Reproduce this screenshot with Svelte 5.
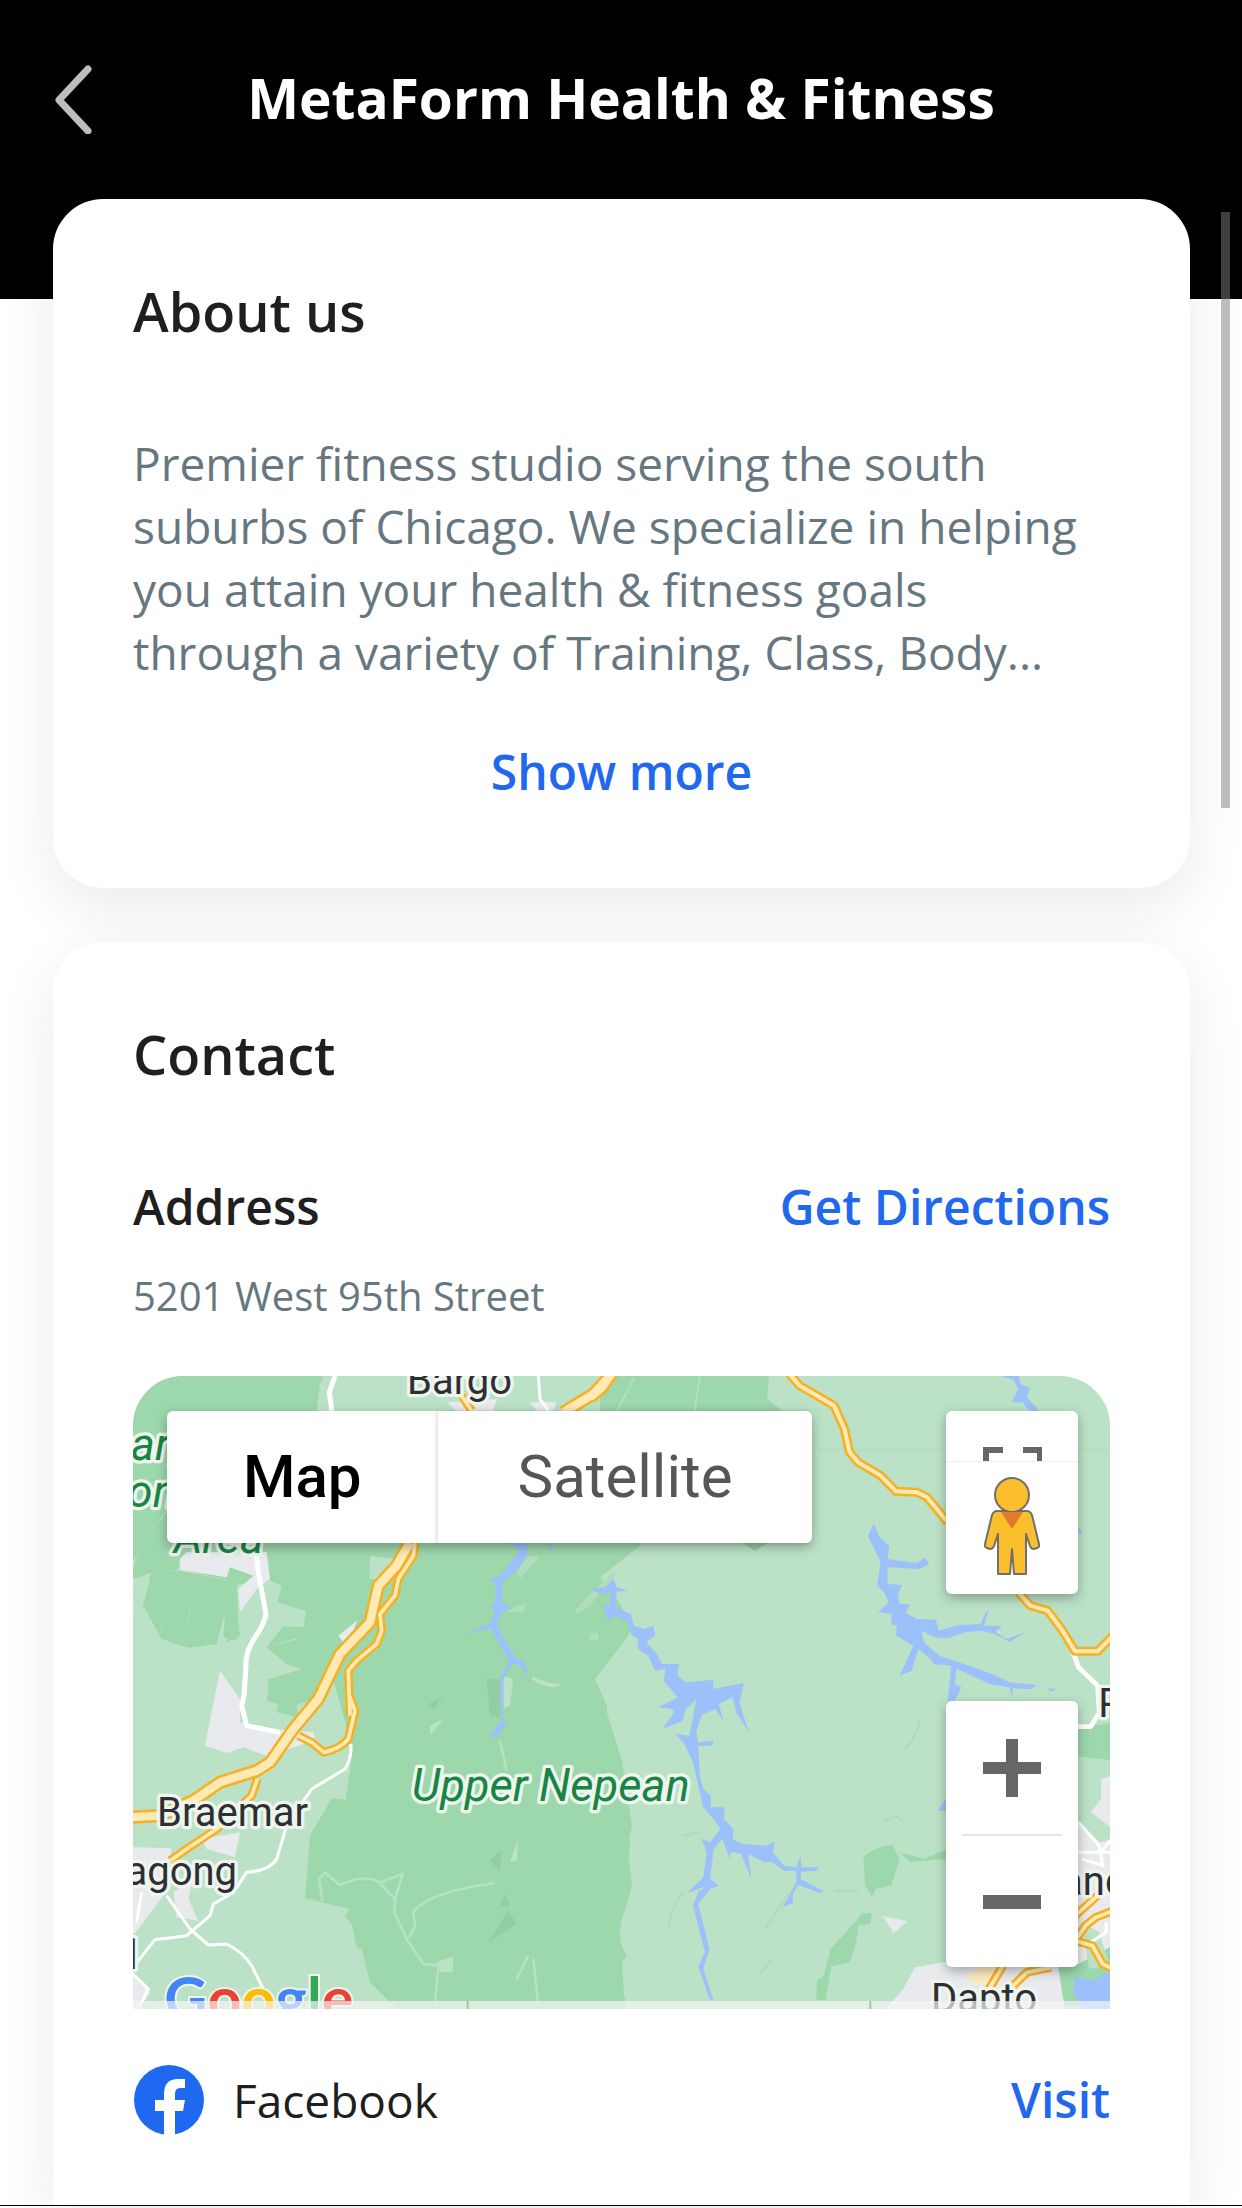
<script lang="ts">
  type MapType = "Map" | "Satellite";

  const about =
    "Premier fitness studio serving the south suburbs of Chicago. We specialize in helping you attain your health & fitness goals through a variety of Training, Class, Body...";

  let expanded = $state(false);
  let mapType = $state<MapType>("Map");
</script>

<div class="page">
  <header class="header">
    <button class="back" aria-label="Back">
      <svg viewBox="0 0 40 72" aria-hidden="true">
        <path d="M34 7 L5 38 L34 69" />
      </svg>
    </button>
    <h1>MetaForm Health &amp; Fitness</h1>
  </header>

  <main class="content">
    <section class="card">
      <h2>About us</h2>
      <p class="about" class:expanded>{about}</p>
      <button class="action show-more" onclick={() => (expanded = !expanded)}>
        {expanded ? "Show less" : "Show more"}
      </button>
    </section>

    <section class="card contact">
      <h2>Contact</h2>
      <div class="row">
        <h3>Address</h3>
        <a class="action" href="#directions">Get Directions</a>
      </div>
      <p class="street">5201 West 95th Street</p>

      <div class="map">
        <svg class="tiles" viewBox="0 0 2931 1899" preserveAspectRatio="xMidYMid slice" aria-hidden="true">
          <rect width="2931" height="1899" fill="#bbe2c6" />

          <!-- west half -->
          <g transform="translate(-39 -51)">
            <g fill="#9dd7ac">
              <path d="M0 0H612L600 150L590 260L140 450L60 570L39 610V0Z" />
              <path d="M39 630L60 560L140 460L560 440H1560V560L1440 655L1480 700L1536 800L1525 830L1425 960L1460 1040L1465 1160L700 1180L640 960L590 850L520 840L440 865L490 800L550 800L558 757L470 740L485 680L440 660L340 680L360 830L320 850L350 670L180 630L90 650L85 725L125 755L122 820L150 850L210 866L290 855L315 760L235 740L210 760L200 820L160 815L125 840L75 750L100 640L39 660Z" />
              <path d="M250 860L200 865L125 840L122 760L68 745L95 640L180 635L350 670L355 760L350 845L310 835L315 765L235 742L207 760L202 820Z" />
              <path d="M440 865L560 835L620 860L650 950L600 1040L545 1030L530 1040L535 1075L470 1060L475 1035L440 1025L450 960L545 930L500 915Z" />
            </g>
            <path d="M600 70H625L650 51H990L960 155H590Z" fill="#bbe2c6" />
            <path d="M750 590L830 600L790 660L748 660ZM440 720L558 757L550 805L440 800Z" fill="#bbe2c6" />
            <path d="M1345 780L1400 715L1480 640L1500 625L1470 665L1410 740ZM1358 835L1435 820V842L1365 860ZM945 895L985 830L980 795L955 785L1000 790L1040 825L1000 835L1000 855L965 895ZM1165 900L1130 940L1115 950L1140 1000V960ZM1190 640L1225 590L1260 590L1200 660ZM1160 760L1200 770L1220 735L1190 740ZM1210 910L1240 960L1325 975L1280 985L1225 955Z" fill="#b0debd" />
            <path d="M180 600L200 580H440L450 660L410 690L360 760L355 690L400 650L330 625L320 655L178 632ZM655 830L735 765L725 810L670 850ZM980 130L1130 120L1120 155H1010ZM1230 130H1310L1300 155H1250Z" fill="#e8eaed" />
            <path d="M300 935L360 1020V1090L440 1110L580 1120L585 1145L440 1190L370 1165L320 1182L255 1160Z" fill="#e8eaed" />
          </g>
          <g transform="translate(-39 909)">
            <path d="M650 0L720 -200H1400L1425 0L1460 80V190L1500 240L1530 500L1500 760L1515 990H830L750 910L725 810L710 805L695 735L675 710L690 690L555 658L570 470L635 358L677 363L700 200L700 60Z" fill="#9dd7ac" />
            <path d="M445 0H545V70L530 78L470 65L475 35L443 25Z" fill="#9dd7ac" />
            <path d="M245 480L360 460L345 535L260 510ZM39 505L155 508L130 650L55 750L39 770ZM160 640L220 600L205 660L235 725L170 715ZM39 880L90 940L60 990H39Z" fill="#e8eaed" />
            <path d="M950 850L1000 832L998 880L960 878Z" fill="#bbe2c6" />
            <path d="M1105 790L1165 695L1190 735ZM1108 545L1145 512L1140 575ZM925 75L970 50L940 90ZM1140 680L1155 645L1170 682ZM1100 0L1110 110L1140 120L1145 0Z" fill="#93cda3" />
            <g fill="none" stroke="#b6e1c2" stroke-width="8" stroke-linejoin="round">
              <path d="M607 665L597 600L615 580L658 617L710 600L755 600L780 610L848 585L825 660L780 612M825 660L823 700L860 780L910 855L955 860L945 970M868 775L885 740L880 700Q920 640 1125 612M1140 185L1160 275M1240 840L1255 980M1190 900L1225 830" />
            </g>
            <path d="M1150 -10L1180 0L1170 80L1150 90ZM1195 480L1190 545L1170 550ZM1235 0Q1290 40 1325 15Q1280 15 1240 -8ZM930 140L970 120L930 170Z" fill="#bbe2c6" />
          </g>

          <!-- east half -->
          <g transform="matrix(1.033 0 0 1 1401 -51)">
            <path d="M0 51H490L485 120L530 155L540 270H0ZM0 500H110L105 565L50 600L0 655Z" fill="#9dd7ac" />
            <path d="M400 545H500L450 575Z" fill="#93cfa3" />
          </g>
          <g transform="matrix(1.033 0 0 1 1401 909)">
            <path d="M0 -20L-30 20L0 40L20 100L62 240L70 290L93 440L80 500L93 620L50 770L77 830L45 880L75 965H-20V-20Z" fill="#9dd7ac" />
            <path d="M765 535Q790 505 850 497L870 540L845 620L800 630L790 655L770 620ZM940 540L1010 510V540L900 548L870 520ZM760 703H790L785 735L750 740L745 790L725 850L672 862L655 965L628 960L630 905L650 890L670 810L740 730ZM1380 150L1490 130V245L1380 230ZM1330 870L1400 730H1490V980H1340Z" fill="#9dd7ac" />
            <path d="M822 712L892 727L853 763ZM1455 300L1490 290V450L1425 400L1455 360ZM1380 420L1450 490L1490 480V800L1380 860ZM915 865L1000 850L1330 860L1350 990H830L880 930Z" fill="#e8eaed" />
            <path d="M1400 730L1450 760L1480 860L1420 870Z" fill="#bbe2c6" />
            <path d="M1380 890L1430 905L1490 870V990H1400L1375 940Z" fill="#9cc0fa" />
            <path d="M1060 900L1100 860H1180L1110 920Z" fill="#fdebc0" />
            <path d="M200 740Q210 680 240 640M480 750L545 645M465 885L500 840M885 210Q920 170 930 125M240 470L290 458M825 428L860 412L880 428M680 635H750" fill="none" stroke="#afdabb" stroke-width="6" />
          </g>

          <!-- rivers -->
          <g transform="translate(-39 -51)" fill="#9cc0fa">
            <path d="M1165 550H1225L1220 590L1190 635L1150 665L1145 730L1175 748L1145 762L1130 800L1185 895L1215 910L1225 950L1195 915L1175 915L1150 960V1090L1160 1092L1160 1095L1125 1140L1112 1130L1145 1080L1138 960L1168 905L1112 808L1035 825L1110 792L1125 760L1110 740L1128 730L1125 670L1105 660L1140 650L1200 575ZM1285 555H1300L1290 580Z" />
          </g>
          <g transform="matrix(1.033 0 0 1 1401 -51)" fill="#9cc0fa">
            <path d="M-30 690L15 685L38 658L50 685L80 695L48 698L45 745L90 765L98 800L130 810L155 800L160 830L135 850L165 885L180 915L230 915L225 950L250 970L330 962L328 990L418 972L405 1030L432 1120L395 1060L385 1015L345 1035L358 1085L335 1050L295 1068L280 1120L285 1150L330 1145L325 1160L285 1160L290 1250L300 1290L322 1310V1345L362 1345L360 1380L388 1410L385 1440L415 1455L480 1460L508 1448L502 1480L535 1520L570 1525L582 1492L585 1525L635 1525L630 1535L585 1538L582 1560L648 1595L640 1602L575 1578L560 1605V1632L530 1645L570 1570V1535L535 1535L500 1510L478 1510L430 1485L440 1560L410 1485L380 1478L378 1500L355 1440L330 1470L320 1560L345 1580L320 1590L285 1635L318 1770L300 1830L330 1925L318 1920L285 1820L305 1780L270 1640L285 1600L310 1580L260 1600L255 1600L300 1555L310 1480L295 1440L320 1450L350 1410L330 1380L300 1345L270 1210L245 1155L220 1125L260 1130L280 1020L250 1050L240 1085L182 1110L215 1060L210 1050L170 1045L225 1015L185 965L190 930L160 935L140 890L110 870V840L90 825L80 790L50 770L22 785L10 740L28 740L30 700L0 705ZM795 493L812 535L840 560L835 600L920 612L945 595L955 615L930 630L835 625L835 675L878 678L865 705L870 735L900 735L888 762L920 780L975 782L985 815L1040 798L1105 795L1120 760L1130 750L1115 800L1168 800L1148 818L1180 840L1235 820L1190 848L1145 825L1110 815L1060 820L1010 838L970 835L935 815L940 850L985 890L1030 905L1140 945L1190 970L1268 978L1255 990L1198 988V1015L1188 985L1130 975L1060 940L1035 930L1030 975L1050 985L1030 1025H1010L1020 920L970 915L965 905L925 870L905 935L870 950L910 860L860 830L862 800L845 795L848 765L808 760L838 730L825 700L805 680L815 610L778 530ZM1165 51H1215L1222 75L1250 88L1240 115L1275 155H1245L1228 130L1195 130L1215 90L1200 62ZM1390 505L1402 520L1390 525ZM1300 988L1325 990L1310 998ZM1005 1320L980 1355H1005Z" />
          </g>

          <!-- minor roads -->
          <g fill="none" stroke="#fff" stroke-linejoin="round">
            <path transform="translate(-39 -51)" stroke-width="15" d="M645 51L628 100L635 155M405 560L415 640L438 765Q430 800 405 835Q375 880 378 920L372 1010L365 1040L380 1100L480 1120" />
            <path transform="translate(-39 909)" stroke-width="9" d="M693 195Q695 240 675 270L575 330L500 440L470 540Q450 575 380 580L340 640L280 675L270 710L200 770L105 782L39 865M140 650L210 750L265 798L320 795Q370 820 395 860L435 940M65 640L50 730M39 885L85 930L60 980" />
            <path transform="translate(-39 -51)" stroke-width="9" d="M1255 51L1260 120L1285 155" />
            <path transform="matrix(1.033 0 0 1 1401 -51)" stroke-width="14" d="M1370 870L1390 925L1445 980L1450 1060L1425 1103H1385" />
            <path transform="matrix(1.033 0 0 1 1401 909)" stroke-width="9" d="M1380 520H1485M1390 430L1450 500L1460 560L1400 540M1485 480L1455 520M1470 730V760L1410 800" />
            <path transform="matrix(1.033 0 0 1 1401 -51)" stroke="#b2dfbd" stroke-width="6" d="M100 55L50 155M290 51L275 155M635 272H1480" />
          </g>

          <!-- highways: dark casing, then light fill -->
          {#each [{ color: "#f6b023", extra: 0 }, { color: "#ffeab5", extra: 15 }] as pass}
            <g fill="none" stroke={pass.color} stroke-linejoin="round">
              <g transform="translate(-39 -51)">
                <path stroke-width={26 - pass.extra} d="M690 1070L685 935L710 905L770 855L785 815L780 765L825 710L835 660L880 590L885 550M1025 110L1055 155M690 1060V1015L705 1055L685 1140Q660 1170 612 1180L575 1150L535 1130M412 1260L395 1310L290 1410L200 1470L150 1505" />
                <path stroke-width={40 - pass.extra} d="M1330 160L1420 105L1475 45M870 550L830 620L775 680L750 790L660 885L595 1020L520 1110L450 1210L410 1235L300 1270L220 1325L120 1370L30 1375" />
              </g>
              <g transform="matrix(1.033 0 0 1 1401 -51)" stroke-width={27 - pass.extra}>
                <path d="M-25 120L10 90L40 45M550 45L580 80L680 140L710 210L725 280L750 310L815 350L860 397L920 400L950 415L1010 490M1215 700L1250 740L1300 755L1340 810L1380 877H1445L1490 830" />
              </g>
              <g transform="matrix(1.033 0 0 1 1401 909)" stroke-width={26 - pass.extra}>
                <path d="M1370 800L1410 740L1440 715L1490 695M1380 785L1430 800L1460 855L1490 870M1380 710L1445 650M1170 860L1130 930M1310 865L1240 880L1195 925" />
              </g>
            </g>
          {/each}

          <g class="labels" font-size="120">
            <text x="822" y="54">Bargo</text>
            <text x="72" y="1349">Braemar</text>
            <text x="312" y="1526" text-anchor="end">Mittagong</text>
            <text x="14" y="1779" text-anchor="end">Bowral</text>
            <text x="2896" y="1024">Port Kembla</text>
            <text x="2394" y="1909">Dapto</text>
            <text x="2640" y="1557">Unanderra</text>
            <g class="park" font-size="136">
              <text x="836" y="1274">Upper Nepean</text>
              <text x="-88" y="251">Bargo State</text>
              <text x="-102" y="392">Conservation</text>
              <text x="122" y="531">Area</text>
            </g>
          </g>

          <text class="logo" x="94" y="1932" font-size="178">
            <tspan fill="#4285f4">G</tspan><tspan fill="#ea4335">o</tspan><tspan fill="#fbbc05">o</tspan><tspan fill="#4285f4">g</tspan><tspan fill="#34a853">l</tspan><tspan fill="#ea4335">e</tspan>
          </text>
          <path d="M0 1875H2931V1899H0Z" fill="#f5f5f5" opacity=".7" />
          <path d="M1004 1875V1899M2212 1875V1899" stroke="#8fc39d" stroke-width="5" />
        </svg>

        <div class="map-types">
          {#each ["Map", "Satellite"] as const as type}
            <button class:selected={mapType === type} onclick={() => (mapType = type)}>{type}</button>
          {/each}
        </div>

        <div class="view-tools">
          <button class="fullscreen" aria-label="Toggle fullscreen view">
            <svg viewBox="0 0 60 16" aria-hidden="true">
              <path d="M4 16V5H21M41 5H58V16" fill="none" stroke="#666" stroke-width="6" />
            </svg>
          </button>
          <button class="pegman" aria-label="Street View">
            <svg viewBox="0 0 56 102" aria-hidden="true">
              <g fill="#fbbf2c" stroke="#6f6f6f" stroke-width="2" stroke-linejoin="round">
                <path d="M12 34Q9 35 8 38L1 67Q0 70 3 71L6 72Q9 72 10 69L14 57V97H26L28 72L30 97H42V57L46 69Q47 72 50 72L53 71Q56 70 55 67L48 38Q47 35 44 34Z" />
                <circle cx="28" cy="18" r="17" />
              </g>
              <path d="M17 35H39L28 52Z" fill="#e07a2c" />
            </svg>
          </button>
        </div>

        <div class="zoom">
          <button aria-label="Zoom in">
            <svg viewBox="0 0 58 58" aria-hidden="true"><path d="M0 23H23V0H35V23H58V35H35V58H23V35H0Z" /></svg>
          </button>
          <button aria-label="Zoom out">
            <svg viewBox="0 0 58 58" aria-hidden="true"><path d="M0 22H58V36H0Z" /></svg>
          </button>
        </div>
      </div>

      <div class="row social">
        <svg class="facebook" viewBox="0 0 72 72" aria-hidden="true">
          <circle cx="36" cy="36" r="35" fill="#1f69f0" />
          <path d="M31 72V47H22V36H31V30Q31 15 45 15H52V24H47Q42 24 42 30V36H52L50 47H42V72Z" fill="#fff" />
        </svg>
        <span class="network">Facebook</span>
        <a class="action" href="#facebook">Visit</a>
      </div>
    </section>
  </main>

  <div class="scrollbar"></div>
</div>

<style>
  :global(body) {
    background: #fff;
  }

  .page {
    position: relative;
    display: flex;
    flex-direction: column;
    box-sizing: border-box;
    min-height: 100vh;
    padding-bottom: 2px;
    overflow: hidden;
    font-family: "Open Sans", "Noto Sans", sans-serif;
    color: #1f1f21;
  }

  h1,
  h2,
  h3,
  p {
    margin: 0;
  }

  button {
    padding: 0;
    border: 0;
    background: none;
    font-family: inherit;
    cursor: pointer;
  }

  svg {
    display: block;
  }

  .header {
    display: grid;
    grid-template-columns: 40px 1fr 40px;
    align-items: center;
    padding: 58px 54px 161px;
    background: #000;
    color: #fff;
  }

  .header h1 {
    font-size: 55px;
    line-height: 80px;
    font-weight: 700;
    text-align: center;
  }

  .back svg {
    width: 40px;
    height: 72px;
    fill: none;
    stroke: #bdbdbd;
    stroke-width: 7;
    stroke-linecap: round;
    stroke-linejoin: round;
  }

  .content {
    display: flex;
    flex: 1;
    flex-direction: column;
    gap: 54px;
    margin-top: -100px;
    padding: 0 52px 0 53px;
    border-bottom: 1px solid #000;
  }

  .card {
    display: flex;
    flex-direction: column;
    padding: 76px 80px 84px;
    border-radius: 50px;
    background: #fff;
    box-shadow: 0 20px 60px rgba(30, 30, 80, 0.09);
  }

  .contact {
    flex: 1;
    padding-bottom: 0;
    border-radius: 50px 50px 0 0;
  }

  h2 {
    margin-bottom: 85px;
    font-size: 54px;
    line-height: 72px;
    font-weight: 600;
  }

  .about {
    display: -webkit-box;
    overflow: hidden;
    -webkit-box-orient: vertical;
    -webkit-line-clamp: 4;
    line-clamp: 4;
    color: #667780;
    font-size: 46px;
    line-height: 63px;
  }

  .about.expanded {
    -webkit-line-clamp: none;
    line-clamp: none;
  }

  .action {
    color: #2268ee;
    font-size: 48px;
    line-height: 64px;
    font-weight: 600;
    text-decoration: none;
  }

  .show-more {
    align-self: center;
    margin-top: 56px;
  }

  .row {
    display: flex;
    align-items: center;
    justify-content: space-between;
  }

  h3 {
    font-size: 48px;
    line-height: 64px;
    font-weight: 600;
  }

  .street {
    margin: 29px 0 52px;
    color: #667780;
    font-size: 40px;
    line-height: 56px;
  }

  .map {
    position: relative;
    aspect-ratio: 977 / 633;
    overflow: hidden;
    border-radius: 50px 50px 0 0;
    font-family: Roboto, sans-serif;
  }

  .tiles {
    width: 100%;
    height: 100%;
  }

  .labels text {
    fill: #2d2f33;
    stroke: #eef5ef;
    stroke-width: 20px;
    stroke-linejoin: round;
    paint-order: stroke;
  }

  .labels .park text {
    fill: #188544;
    font-style: italic;
  }

  .logo {
    font-family: Lato, sans-serif;
    font-weight: 700;
    stroke: #eef5ef;
    stroke-width: 12px;
    paint-order: stroke;
  }

  .map-types,
  .view-tools,
  .zoom {
    position: absolute;
    border-radius: 6px;
    background: #fff;
    box-shadow: 0 4px 12px rgba(0, 0, 0, 0.3);
  }

  .map-types {
    top: 35px;
    left: 34px;
    display: flex;
  }

  .map-types button {
    padding: 0 80px;
    color: #565656;
    font-size: 60px;
    line-height: 132px;
  }

  .map-types button + button {
    box-shadow: -2px 0 4px rgba(0, 0, 0, 0.12);
  }

  .map-types .selected {
    padding: 0 76px;
    color: #000;
    font-weight: 500;
  }

  .view-tools {
    top: 35px;
    right: 32px;
    width: 132px;
  }

  .fullscreen {
    display: flex;
    align-items: flex-end;
    justify-content: center;
    width: 100%;
    height: 50px;
  }

  .fullscreen svg {
    width: 60px;
    height: 16px;
  }

  .pegman {
    display: flex;
    align-items: center;
    justify-content: center;
    width: 100%;
    height: 133px;
    border-top: 1px solid #eee;
  }

  .pegman svg {
    width: 56px;
    height: 102px;
  }

  .zoom {
    right: 32px;
    bottom: 42px;
    width: 132px;
  }

  .zoom button {
    display: flex;
    align-items: center;
    justify-content: center;
    width: 100px;
    height: 133px;
    margin: 0 auto;
  }

  .zoom button + button {
    border-top: 2px solid #e6e6e6;
  }

  .zoom svg {
    width: 58px;
    height: 58px;
    fill: #666;
  }

  .social {
    gap: 28px;
    padding: 55px 0;
  }

  .facebook {
    width: 72px;
    height: 72px;
  }

  .network {
    flex: 1;
    font-size: 46px;
    line-height: 64px;
  }

  .scrollbar {
    position: absolute;
    top: 212px;
    right: 12px;
    width: 9px;
    height: 596px;
    background: rgba(125, 125, 125, 0.5);
  }
</style>
